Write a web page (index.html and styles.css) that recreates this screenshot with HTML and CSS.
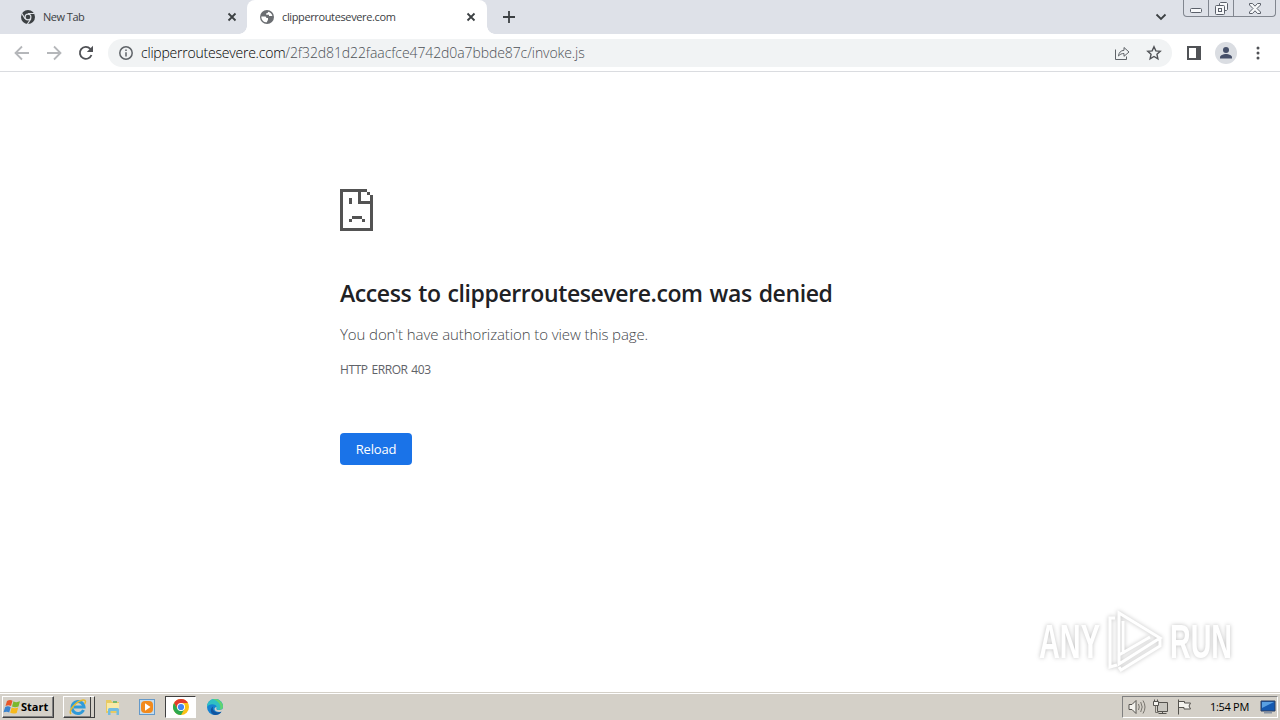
FILE: index.html
```html
<!DOCTYPE html>
<html lang="en">
<head>
  <meta charset="UTF-8">
  <meta name="viewport" content="width=device-width, initial-scale=1.0">
  <title>clipperroutesevere.com</title>
  <link rel="stylesheet" href="styles.css">
</head>
<body>
<div class="tab-strip">
  <div class="tab">
    <svg class="favicon" width="14" height="14" viewBox="0 0 24 24">
      <circle cx="12" cy="12" r="12" fill="#3c4043"/>
      <circle cx="12" cy="12" r="5" fill="#3c4043" stroke="#dee1e6" stroke-width="2"/>
      <path d="M12 6h11M7 15L1.500 6M17 15l-6 9" stroke="#dee1e6" stroke-width="2"/>
    </svg>
    <span class="tab-title tab-title-new">New Tab</span>
    <svg class="close" width="10" height="10" viewBox="0 0 10 10"><path d="M1.500 1.500l7 7m0-7l-7 7"/></svg>
  </div>
  <div class="tab active">
    <svg class="favicon" width="14" height="14" viewBox="0 0 14 14">
      <circle cx="7" cy="7" r="7" fill="#6b6e72"/>
      <path d="M1.300 6.500h3.200c1.600 0 2 .7 1.800 1.600H8v1.300c0 1-1 1.200-1 2.900C3.500 12.300 1.300 10 1.300 6.500zM8 1.700c0 1.400-.5 1.500-1.800 1.500v1.500H9v1.400h3.400C12 4 10.300 2 8 1.700z" fill="#fff"/>
    </svg>
    <span class="tab-title">clipperroutesevere.com</span>
    <svg class="close" width="10" height="10" viewBox="0 0 10 10"><path d="M1.500 1.500l7 7m0-7l-7 7"/></svg>
  </div>
  <svg class="new-tab" width="12" height="12" viewBox="0 0 12 12"><path d="M6 0v12M0 6h12"/></svg>
  <svg class="tab-search" width="12" height="8" viewBox="0 0 12 8"><path d="M1.500 1.500L6 6l4.500-4.500"/></svg>
  <div class="window-buttons">
    <span class="win-btn minimize">
      <svg width="13" height="5" viewBox="0 0 13 5"><rect x=".5" y=".5" width="11" height="4" rx="1"/></svg>
    </span>
    <span class="win-btn restore">
      <svg width="13" height="13" viewBox="0 0 13 13"><path d="M4.500 3.500v-2l1-1h6l1 1v6l-1 1h-2"/><rect x=".5" y="3.500" width="9" height="9" rx="1"/><rect x="3.500" y="6.500" width="3" height="3"/></svg>
    </span>
    <span class="win-btn win-close">
      <svg width="12" height="11" viewBox="0 0 12 11"><path d="M.5.500h3L6 3.200 8.500.500h3v1.500L8 5.500 11.500 9v1.500h-3L6 7.800l-2.500 2.700h-3V9L4 5.500.500 2z"/></svg>
    </span>
  </div>
</div>

<div class="toolbar">
  <svg class="nav-btn muted" width="16" height="16" viewBox="0 0 16 16"><path d="M15 8H2M8 1.500L1.500 8 8 14.500"/></svg>
  <svg class="nav-btn muted" width="16" height="16" viewBox="0 0 16 16"><path d="M1 8h13M8 1.500L14.500 8 8 14.500"/></svg>
  <svg class="nav-btn reload" width="16" height="16" viewBox="0 0 16 16"><path d="M13.500 10A6 6 0 1 1 12.300 3.800L14 5.500"/><path class="solid" d="M15 .8V7H8.800z"/></svg>
  <div class="omnibox">
    <svg class="info" width="14" height="14" viewBox="0 0 14 14"><circle cx="7" cy="7" r="6.200"/><path d="M7 6.200v4.300M7 3.400v1.500"/></svg>
    <span class="host">clipperroutesevere.com</span><span class="path">/2f32d81d22faacfce4742d0a7bbde87c/invoke.js</span>
    <svg class="share" width="16" height="16" viewBox="0 0 16 16"><path d="M1.500 4.500v10h11v-3M4.500 11c.3-3.500 2.300-5.500 5.500-5.700V2.500L15 7l-5 4.300V8.500C7.500 8.500 6 9.300 4.500 11z"/></svg>
    <svg class="star" width="16" height="16" viewBox="0 0 16 16"><path d="M8 1.800l1.850 4.100 4.400.45-3.300 3 .95 4.400L8 11.500l-3.900 2.250.95-4.400-3.300-3 4.400-.45z"/></svg>
  </div>
  <svg class="side-panel" width="14" height="14" viewBox="0 0 14 14"><rect x="1" y="1" width="12" height="12"/><path d="M9 1h4v12H9z"/></svg>
  <svg class="avatar" width="22" height="22" viewBox="0 0 22 22">
    <circle cx="11" cy="11" r="11" fill="#dadde2"/>
    <circle cx="11" cy="8" r="3" fill="#465069"/>
    <path d="M5 16.500v-1.200c0-2 3.500-3.300 6-3.300s6 1.300 6 3.300v1.200z" fill="#465069"/>
  </svg>
  <svg class="menu" width="4" height="14" viewBox="0 0 4 14"><circle cx="2" cy="2" r="1.500"/><circle cx="2" cy="7" r="1.500"/><circle cx="2" cy="12" r="1.500"/></svg>
</div>

<main class="page">
  <div class="error-content">
    <svg class="error-icon" width="33" height="42" viewBox="0 0 33 42" shape-rendering="crispEdges">
      <path d="M0 0h27v3H3v36h27V15H18V3h3v9h12v30H0zM27 3h3v3h-3zM30 6h3v6h-3zM9 9h3v6H9zM12 27h10v3H12zM9 30h3v3H9zM22 30h3v3h-3z" fill="#535353"/>
    </svg>
    <h1>Access to clipperroutesevere.com was denied</h1>
    <p class="message">You don't have authorization to view this page.</p>
    <p class="error-code">HTTP ERROR 403</p>
    <button class="reload-btn">Reload</button>
  </div>
  <div class="watermark">
    <svg class="wm-text" width="64" height="64" viewBox="0 0 64 64"><text x="1" y="49" textLength="61" lengthAdjust="spacingAndGlyphs">ANY</text></svg>
    <svg class="wm-logo" width="60" height="64" viewBox="0 0 60 64">
      <path d="M9 9H4v49l7-2M13 46V4l41 25-41 26v-9l31-18M13 58l2 3 39-24v-8M17 12v33"/>
    </svg>
    <svg class="wm-text" width="64" height="64" viewBox="0 0 64 64"><text x="0" y="49" textLength="62" lengthAdjust="spacingAndGlyphs">RUN</text></svg>
  </div>
</main>

<div class="taskbar">
  <div class="start-btn">
    <svg width="18" height="16" viewBox="0 0 18 16">
      <path d="M4 2q3-2 5.500-.3L8 7Q5.500 5.500 2.500 7z" fill="#e8572a"/>
      <path d="M10.500 2.200Q13 4 17 2.300L15.500 7.500Q12 9 9 7.400z" fill="#7ab82e"/>
      <path d="M2.200 8Q5 6.500 7.700 8.200L6.200 13.500Q4 12 .500 13.300z" fill="#3b84cf"/>
      <path d="M8.700 8.500Q11.500 10 15.200 8.600L13.700 14Q10.500 15.300 7.200 13.800z" fill="#f7b91c"/>
    </svg>
    <span>Start</span>
  </div>
  <div class="task ie">
    <svg width="18" height="18" viewBox="0 0 18 18">
      <path d="M14.500 12A6 6 0 1 1 15 9H5" fill="none" stroke="#309bd9" stroke-width="3"/>
      <path d="M2 16C-1 13 7 3 14 2c3-.4 3 2 1.500 4" fill="none" stroke="#e5b92d" stroke-width="1.500"/>
    </svg>
  </div>
  <svg class="task-icon" width="18" height="18" viewBox="0 0 18 18">
    <path d="M2 2h5l1 2h7v11H2z" fill="#e8ca62"/>
    <path d="M3 5h12v8H3z" fill="#f8e9a6"/>
    <path d="M4 17v-5.500q0-1.500 1.500-1.500h8q1.500 0 1.500 1.500V17h-2.500v-4h-6v4z" fill="#71bce1"/>
    <path d="M9 3h4v2H9z" fill="#76b870"/>
  </svg>
  <svg class="task-icon" width="18" height="18" viewBox="0 0 18 18">
    <rect x="1.500" y="1.500" width="15" height="15" fill="#c5dced" stroke="#6499c9"/>
    <rect x="3" y="3" width="12" height="12" rx="4" fill="#f28a1c"/>
    <path d="M7 5.300v7.400L12.500 9z" fill="#fff"/>
  </svg>
  <div class="task chrome">
    <svg width="16" height="16" viewBox="0 0 16 16">
      <circle cx="8" cy="8" r="8" fill="#fbc116"/>
      <path d="M1.070 4A8 8 0 0 1 14.930 4H8L4.540 10z" fill="#e33b2e"/>
      <path d="M1.070 4A8 8 0 0 0 8 16l3.460-6H4.540z" fill="#2da94f"/>
      <circle cx="8" cy="8" r="4" fill="#fff"/>
      <circle cx="8" cy="8" r="3.100" fill="#4285f4"/>
    </svg>
  </div>
  <svg class="task-icon edge" width="16" height="16" viewBox="0 0 16 16">
    <circle cx="8" cy="8" r="8" fill="#1683d2"/>
    <path d="M0 8A8 8 0 0 1 16 7.500c0 2.500-2 3.500-4.500 3.500C9 11 9.500 9.500 9.500 8 9.500 4.500 2 4 0 8z" fill="#2fc0c4"/>
    <path d="M8 0a8 8 0 0 1 8 7.500c0 2-1.500 3.300-3.500 3.400C15 7 12 2 6 .3z" fill="#62d470"/>
    <path d="M6.200 7.500c-1.700 3.500 1.500 7.500 8.300 5.200A8 8 0 0 1 8 16C3 15 2.500 9.500 6.200 7.500z" fill="#11549f"/>
    <path d="M9.500 8c0 1.500-.7 3 2 3s4-.6 4.400-1.800l.1 2.800c-3 2-8.500 1-8.500-2 0-1 .8-1.900 2-2z" fill="#d4d0c8"/>
  </svg>
  <div class="tray">
    <svg width="18" height="16" viewBox="0 0 18 16"><path d="M1 5.500h3l4-4v13l-4-4H1z"/><path class="line" d="M10.500 5q1.500 3 0 6M12.700 3q3 5 0 10M15 1.500q4 6.500 0 13"/></svg>
    <svg width="18" height="16" viewBox="0 0 18 16"><path class="monitor" d="M5.500 3.500h10v9h-10z"/><path d="M6.500 14.500h8M10.500 12.500v2"/><path d="M1.500 2.500h5v4h-5zM2.500.5v2M5.500.5v2"/><path class="line" d="M3.500 6.500v7h3"/></svg>
    <svg width="18" height="16" viewBox="0 0 18 16"><path d="M2.500 15.500v-15M2.500 2.500h6v1.500h6L13 7l1.500 3H8V8.500H2.500"/></svg>
    <span class="clock">1:54 PM</span>
    <svg class="desktop" width="16" height="16" viewBox="0 0 16 16">
      <path class="screen" d="M1 2h14v10H1z"/>
      <path class="glare" d="M2 3h12L2 9z"/>
      <path class="stand" d="M4 13h8v1.500H4z"/>
    </svg>
  </div>
</div>
</body>
</html>
```

FILE: styles.css
```css
* {
  margin: 0;
  padding: 0;
  box-sizing: border-box;
}

body {
  display: flex;
  flex-direction: column;
  height: 100vh;
  overflow: hidden;
  background-color: #fff;
  font-family: 'Open Sans', 'Noto Sans', sans-serif;
}

svg {
  flex-shrink: 0;
  fill: none;
}

.tab-strip {
  display: flex;
  align-items: center;
  height: 34px;
  background-color: #dee1e8;
}

.tab {
  display: flex;
  align-items: center;
  width: 247px;
  height: 34px;
  padding: 0 10px 0 21px;
}

.tab.active {
  position: relative;
  width: 240px;
  padding: 0 11px 0 13px;
  border-radius: 8px 8px 0 0;
  background-color: #fff;
}

/* flared bottom corners of the selected tab */
.tab.active::before,
.tab.active::after {
  content: '';
  position: absolute;
  bottom: 0;
  width: 8px;
  height: 8px;
}

.tab.active::before {
  left: -8px;
  background: radial-gradient(circle at 0 0, transparent 7.5px, #fff 8px);
}

.tab.active::after {
  right: -8px;
  background: radial-gradient(circle at 100% 0, transparent 7.5px, #fff 8px);
}

.tab-title {
  flex: 1;
  margin-left: 8px;
  padding-bottom: 2px;
  font-size: 11px;
  letter-spacing: -0.37px;
  white-space: nowrap;
  color: #3c4043;
}

.tab-title-new {
  letter-spacing: -0.5px;
}

.close {
  stroke: #3c4043;
  stroke-width: 1.8;
}

.new-tab {
  margin-left: 16px;
  stroke: #3c4043;
  stroke-width: 1.8;
}

.tab-search {
  margin-left: auto;
  margin-right: 16px;
  stroke: #3c4043;
  stroke-width: 1.8;
}

.window-buttons {
  display: flex;
  align-self: flex-start;
  width: 93px;
  height: 17px;
  margin-right: 4px;
  border: 1px solid #81868f;
  border-top: none;
  border-radius: 0 0 4px 4px;
}

.win-btn {
  display: flex;
  align-items: center;
  justify-content: center;
  width: 25px;
  border-right: 1px solid #81868f;
}

.win-btn svg {
  fill: #f7f8fa;
  stroke: #5b606a;
}

.minimize {
  padding-top: 5px;
}

.win-close {
  flex: 1;
  border-right: none;
}

.toolbar {
  display: flex;
  align-items: center;
  height: 38px;
  padding-left: 14px;
  border-bottom: 1px solid #dadce0;
}

.nav-btn {
  margin-right: 16px;
  stroke: #505256;
  stroke-width: 1.8;
}

.nav-btn.muted {
  stroke: #b5b7ba;
}

.nav-btn.reload {
  margin-right: 14px;
}

.nav-btn .solid {
  fill: #505256;
  stroke: none;
}

.omnibox {
  display: flex;
  align-items: center;
  width: 1064px;
  height: 28px;
  padding: 0 10px 0 11px;
  border-radius: 14px;
  background-color: #f1f3f4;
  font-size: 14px;
  font-weight: 300;
  white-space: nowrap;
}

.info {
  margin-right: 8px;
  stroke: #5f6368;
  stroke-width: 1.5;
}

.host {
  letter-spacing: -0.22px;
  color: #000;
}

.path {
  letter-spacing: -0.09px;
  color: #4d5156;
}

.share {
  margin-left: auto;
  margin-right: 16px;
  stroke: #5f6368;
}

.star {
  stroke: #505256;
  stroke-width: 1.4;
}

.side-panel {
  margin-left: 15px;
  stroke: #505256;
  stroke-width: 2;
}

.side-panel path {
  fill: #505256;
  stroke: none;
}

.avatar {
  margin-left: 14px;
}

.menu {
  margin-left: 19px;
  fill: #505256;
}

.page {
  position: relative;
  flex: 1;
}

.error-content {
  display: flex;
  flex-direction: column;
  align-items: flex-start;
  width: 600px;
  margin: 0 auto;
  padding-top: 117px;
  white-space: nowrap;
  color: #5f6368;
}

h1 {
  margin-top: 46px;
  font-size: 23px;
  line-height: 32px;
  font-weight: 600;
  letter-spacing: -0.4px;
  word-spacing: 1.4px;
  color: #202124;
}

.message {
  margin-top: 13px;
  font-size: 15px;
  line-height: 24px;
  font-weight: 300;
  letter-spacing: -0.1px;
  color: #44474b;
}

.error-code {
  margin-top: 14px;
  font-size: 12px;
  line-height: 20px;
  letter-spacing: -0.4px;
  word-spacing: 1px;
}

.reload-btn {
  width: 72px;
  height: 32px;
  margin-top: 53px;
  border: none;
  border-radius: 4px;
  background-color: #1a73e8;
  color: #fff;
  font-family: inherit;
  font-size: 13px;
  letter-spacing: -0.2px;
}

/* sits over the bottom right corner of the page */
.watermark {
  position: absolute;
  right: 46px;
  bottom: 19px;
  display: flex;
  align-items: center;
  gap: 4px;
  filter: drop-shadow(0 0 2px rgba(0, 0, 0, 0.25));
}

.wm-logo {
  stroke: #fff;
  stroke-width: 3;
}

.wm-text {
  overflow: visible;
  fill: #fff;
  font-family: 'Liberation Sans', sans-serif;
  font-size: 48px;
  font-weight: 700;
}

.taskbar {
  display: flex;
  align-items: center;
  height: 28px;
  padding: 1px 2px 0;
  border-top: 1px solid #d4d0c8;
  box-shadow: inset 0 1px #fff;
  background-color: #d4d0c8;
}

.start-btn {
  display: flex;
  align-items: center;
  width: 52px;
  height: 22px;
  border: 1px solid;
  border-color: #fff #404040 #404040 #fff;
  box-shadow: inset -1px -1px #808080;
  font-size: 11px;
  font-weight: 700;
  color: #000;
}

.start-btn span {
  padding-bottom: 1px;
}

.task {
  display: flex;
  align-items: center;
  justify-content: center;
  height: 22px;
  border: 1px solid;
}

.task.ie {
  width: 32px;
  margin-left: 9px;
  padding-right: 3px;
  border-color: #fff #404040 #404040 #fff;
  box-shadow: inset -3px 0 #d4d0c8, inset -4px 0 #404040, inset 0 -1px #808080;
}

.task-icon {
  margin-left: 9px;
}

.task-icon + .task-icon {
  margin-left: 16px;
}

.task.chrome {
  width: 31px;
  margin-left: 9px;
  border-color: #404040 #fff #fff #404040;
  background-color: #fff;
}

.edge {
  margin-left: 11px;
}

.tray {
  display: flex;
  align-items: center;
  width: 156px;
  height: 22px;
  margin-left: auto;
  padding-left: 5px;
  border: 1px solid;
  border-color: #808080 #fff #fff #808080;
}

.tray svg {
  margin-right: 6px;
  fill: #f4f3ee;
  stroke: #55534e;
}

.tray .line {
  fill: none;
  stroke: #77746d;
}

.tray .monitor {
  fill: #c9c7c0;
}

.clock {
  margin-left: 10px;
  margin-right: 11px;
  padding-bottom: 1px;
  font-size: 11px;
  letter-spacing: -0.3px;
  white-space: nowrap;
  color: #000;
}

.tray .desktop {
  margin-right: 0;
}

.desktop .screen {
  fill: #1559b0;
  stroke: #2d3f60;
}

.desktop .glare {
  fill: #5aa0e2;
  stroke: none;
}

.desktop .stand {
  fill: #8793a3;
  stroke: none;
}
```
